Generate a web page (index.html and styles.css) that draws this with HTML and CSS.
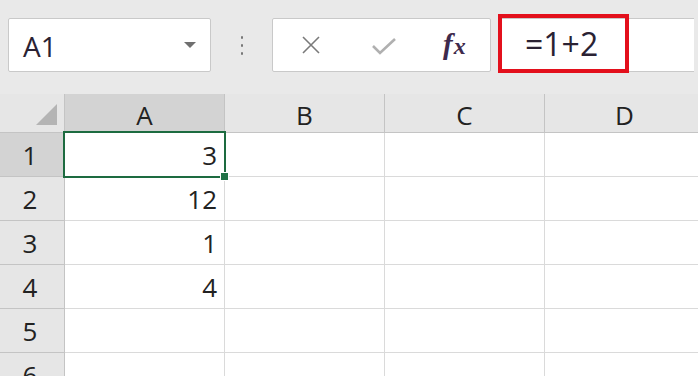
FILE: index.html
```html
<!DOCTYPE html>
<html>
<head>
<meta charset="utf-8">
<link rel="stylesheet" href="styles.css">
</head>
<body>
<div class="toolbar">
  <div class="namebox">
    <span class="ref">A1</span>
    <span class="caret"></span>
  </div>
  <div class="dots"><i></i><i></i><i></i></div>
  <div class="fbtns">
    <svg class="ic-x" width="20" height="20" viewBox="0 0 20 20"><path d="M2 2L18 18M18 2L2 18" stroke="#7a7a7a" stroke-width="1.6" fill="none"/></svg>
    <svg class="ic-ok" width="26" height="20" viewBox="0 0 26 20"><path d="M2 10L9 17L24 3" stroke="#b0b0b0" stroke-width="2.6" fill="none"/></svg>
    <span class="fx">f<span class="fx-x">x</span></span>
  </div>
  <div class="finput">
    <span class="formula">=1+2</span>
  </div>
</div>
<div class="sheet">
  <div class="corner"><span class="tri"></span></div>
  <div class="colh sel">A</div>
  <div class="colh">B</div>
  <div class="colh">C</div>
  <div class="colh">D</div>

  <div class="rowh sel">1</div>
  <div class="cell active">3<span class="handle"></span></div>
  <div class="cell"></div><div class="cell"></div><div class="cell"></div>

  <div class="rowh">2</div>
  <div class="cell">12</div>
  <div class="cell"></div><div class="cell"></div><div class="cell"></div>

  <div class="rowh">3</div>
  <div class="cell">1</div>
  <div class="cell"></div><div class="cell"></div><div class="cell"></div>

  <div class="rowh">4</div>
  <div class="cell">4</div>
  <div class="cell"></div><div class="cell"></div><div class="cell"></div>

  <div class="rowh">5</div>
  <div class="cell"></div>
  <div class="cell"></div><div class="cell"></div><div class="cell"></div>

  <div class="rowh">6</div>
  <div class="cell"></div>
  <div class="cell"></div><div class="cell"></div><div class="cell"></div>
</div>
</body>
</html>
```
FILE: styles.css
```css
html, body {
  margin: 0;
  padding: 0;
}
body {
  width: 698px;
  height: 376px;
  overflow: hidden;
  background: #e9e9e9;
  font-family: "Open Sans", "Noto Sans", sans-serif;
  color: #222;
}
.toolbar {
  height: 94px;
  box-sizing: border-box;
  padding-top: 18px;
  display: flex;
  align-items: flex-start;
}
.namebox {
  margin-left: 8px;
  width: 203px;
  height: 54px;
  box-sizing: border-box;
  background: #fff;
  border: 1px solid #c9c9c9;
  border-radius: 2px;
  display: flex;
  align-items: center;
  padding-left: 14px;
  padding-right: 14px;
}
.ref {
  flex: 1;
  font-size: 28px;
  color: #2a2233;
  line-height: 1;
  margin-top: 1px;
}
.caret {
  width: 0;
  height: 0;
  border-left: 6px solid transparent;
  border-right: 6px solid transparent;
  border-top: 6px solid #6f6f6f;
}
.dots {
  width: 61px;
  height: 54px;
  display: flex;
  flex-direction: column;
  align-items: center;
  justify-content: center;
  gap: 5px;
}
.dots i {
  display: block;
  width: 2px;
  height: 3px;
  background: #777;
  border-radius: 1px;
}
.fbtns {
  width: 219px;
  height: 54px;
  box-sizing: border-box;
  background: #fff;
  border: 1px solid #c9c9c9;
  border-radius: 2px;
  display: flex;
  align-items: center;
  padding-left: 28px;
}
.ic-x {
  margin-right: 50px;
}
.ic-ok {
  margin-right: 46px;
  margin-top: 2px;
}
.fx {
  font-family: "Liberation Serif", "DejaVu Serif", serif;
  font-style: italic;
  font-weight: bold;
  font-size: 29px;
  line-height: 1;
  color: #3e2a4c;
  margin-top: -2px;
}
.fx-x {
  font-size: 24px;
  margin-left: 1px;
}
.finput {
  margin-left: 7px;
  width: 196px;
  height: 54px;
  box-sizing: border-box;
  background: #fff;
  border-top: 1px solid #c9c9c9;
  border-bottom: 1px solid #c9c9c9;
  position: relative;
  display: flex;
  align-items: center;
}
.formula {
  margin-left: 27px;
  font-size: 32px;
  line-height: 1;
  color: #2a2233;
  margin-top: -2px;
}
.finput::before {
  content: "";
  position: absolute;
  left: 0;
  top: -5px;
  width: 131px;
  height: 59px;
  box-sizing: border-box;
  border: 4px solid #e3101c;
}
.sheet {
  display: grid;
  grid-template-columns: 65px 160px 160px 160px 160px;
  grid-template-rows: 39px repeat(6, 44px);
  background: #fff;
}
.corner {
  background: #e6e6e6;
  border-right: 1px solid #c4c4c4;
  border-bottom: 1px solid #c4c4c4;
  position: relative;
}
.tri {
  position: absolute;
  right: 7px;
  bottom: 7px;
  width: 0;
  height: 0;
  border-left: 21px solid transparent;
  border-bottom: 21px solid #b4b4b4;
}
.colh, .rowh {
  background: #e6e6e6;
  display: flex;
  align-items: center;
  justify-content: center;
  font-size: 26px;
  color: #222;
  border-right: 1px solid #c4c4c4;
  border-bottom: 1px solid #c4c4c4;
}
.colh {
  padding-top: 3px;
}
.colh.sel, .rowh.sel {
  background: #d3d3d3;
}
.rowh {
  padding-right: 4px;
}
.cell {
  border-right: 1px solid #dadada;
  border-bottom: 1px solid #dadada;
  display: flex;
  align-items: center;
  justify-content: flex-end;
  padding-right: 7px;
  font-size: 26px;
  color: #222;
  position: relative;
}
.cell.active::after {
  content: "";
  position: absolute;
  left: -2px;
  top: -2px;
  right: -2px;
  bottom: -2px;
  border: 2px solid #1d6b40;
}
.handle {
  position: absolute;
  right: -5px;
  bottom: -5px;
  width: 7px;
  height: 7px;
  background: #1f7246;
  border: 1px solid #fff;
  z-index: 2;
}
```
